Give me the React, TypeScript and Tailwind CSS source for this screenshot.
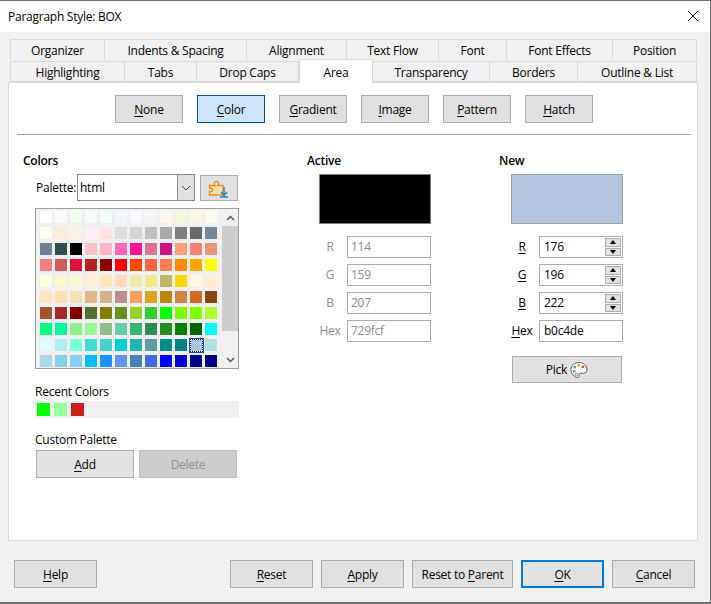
const palette = [
  ['#ffffff', '#fffafa', '#f0fff0', '#f5fffa', '#f0ffff', '#f0f8ff', '#f8f8ff', '#f5f5f5', '#fff5ee', '#f5f5dc', '#fdf5e6', '#fffaf0'],
  ['#fffff0', '#faebd7', '#faf0e6', '#fff0f5', '#ffe4e1', '#dcdcdc', '#d3d3d3', '#c0c0c0', '#a9a9a9', '#808080', '#696969', '#778899'],
  ['#708090', '#2f4f4f', '#000000', '#ffc0cb', '#ffb6c1', '#ff69b4', '#ff1493', '#db7093', '#c71585', '#ffa07a', '#fa8072', '#e9967a'],
  ['#f08080', '#cd5c5c', '#dc143c', '#b22222', '#8b0000', '#ff0000', '#ff4500', '#ff6347', '#ff7f50', '#ff8c00', '#ffa500', '#ffff00'],
  ['#ffffe0', '#fffacd', '#fafad2', '#ffefd5', '#ffe4b5', '#ffdab9', '#eee8aa', '#f0e68c', '#bdb76b', '#ffd700', '#fff8dc', '#ffebcd'],
  ['#ffe4c4', '#ffdead', '#f5deb3', '#deb887', '#d2b48c', '#bc8f8f', '#f4a460', '#daa520', '#b8860b', '#cd853f', '#d2691e', '#8b4513'],
  ['#a0522d', '#a52a2a', '#800000', '#556b2f', '#808000', '#6b8e23', '#9acd32', '#32cd32', '#00ff00', '#7cfc00', '#7fff00', '#adff2f'],
  ['#00ff7f', '#00fa9a', '#90ee90', '#98fb98', '#8fbc8f', '#66cdaa', '#3cb371', '#2e8b57', '#228b22', '#008000', '#006400', '#00ffff'],
  ['#e0ffff', '#afeeee', '#7fffd4', '#40e0d0', '#48d1cc', '#00ced1', '#20b2aa', '#5f9ea0', '#008b8b', '#008080', '#b0c4de', '#b0e0e6'],
  ['#add8e6', '#87ceeb', '#87cefa', '#00bfff', '#1e90ff', '#6495ed', '#4682b4', '#4169e1', '#0000ff', '#0000cd', '#00008b', '#000080'],
]

const topTabs = [
  { label: 'Organizer', w: 'w-[95px]' },
  { label: 'Indents & Spacing', w: 'w-[142px]' },
  { label: 'Alignment', w: 'w-[100px]' },
  { label: 'Text Flow', w: 'w-[92px]' },
  { label: 'Font', w: 'w-[68px]' },
  { label: 'Font Effects', w: 'w-[106px]' },
  { label: 'Position', w: 'w-[84px]' },
]

const lowerTabs = [
  { label: 'Highlighting', w: 'w-[115px]' },
  { label: 'Tabs', w: 'w-[72px]' },
  { label: 'Drop Caps', w: 'w-[102px]' },
  { label: 'Area', w: 'w-[74px]', active: true },
  { label: 'Transparency', w: 'w-[117px]' },
  { label: 'Borders', w: 'w-[88px]' },
  { label: 'Outline & List', w: 'w-[119px]' },
]

function Key({ before = '', k, after = '' }: { before?: string; k: string; after?: string }) {
  return (
    <span>
      {before}
      <span className="underline underline-offset-2">{k}</span>
      {after}
    </span>
  )
}

const tones = {
  normal: 'border border-[#adadad] bg-[#e1e1e1]',
  selected: 'border border-[#005499] bg-[#cce4f7]',
  disabled: 'border border-[#bfbfbf] bg-[#cccccc] text-[#8f8f8f]',
  primary: 'border-2 border-[#0078d7] bg-[#e1e1e1]',
}

function Btn({
  className,
  tone = 'normal',
  children,
}: {
  className: string
  tone?: keyof typeof tones
  children: React.ReactNode
}) {
  return <div className={`flex items-center justify-center pt-[1px] ${tones[tone]} ${className}`}>{children}</div>
}

function ReadOnlyField({ label, value }: { label: string; value: string }) {
  return (
    <div className="flex h-[22px] items-center">
      <div className="mr-[6px] w-[22px] text-center text-[#8a8a8a]">{label}</div>
      <div className="flex h-[22px] w-[84px] items-center border border-[#adadad] pl-[3px] text-[#8a8a8a]">{value}</div>
    </div>
  )
}

function SpinField({ k, value }: { k: string; value: string }) {
  return (
    <div className="flex h-[22px] items-center">
      <div className="mr-[6px] w-[22px] text-center">
        <Key k={k} />
      </div>
      <div className="flex h-[22px] w-[84px] items-center justify-between border border-[#adadad] pl-[4px] pr-[1px]">
        <span>{value}</span>
        <div className="flex h-[18px] w-[16px] flex-col gap-[1px]">
          <div className="flex h-[8.5px] flex-1 items-center justify-center border border-[#adadad] bg-[#e1e1e1]">
            <div className="h-0 w-0 border-x-[3.5px] border-b-[4px] border-x-transparent border-b-black" />
          </div>
          <div className="flex h-[8.5px] flex-1 items-center justify-center border border-[#adadad] bg-[#e1e1e1]">
            <div className="h-0 w-0 border-x-[3.5px] border-t-[4px] border-x-transparent border-t-black" />
          </div>
        </div>
      </div>
    </div>
  )
}

function PuzzleIcon() {
  return (
    <svg width="22" height="20" viewBox="0 0 22 20" fill="none">
      <path d="M1.5 7.5h5.5c-1.2-1.5-1-4 1.5-4s2.7 2.5 1.5 4h5v9.5H1.5v-3.500c2 .8 3.200-.5 3.200-1.500s-1.200-2.300-3.200-1.500z" fill="#fde3a7" stroke="#ed8b2d" strokeWidth="1.400" />
      <path d="M16 9v8M13 14l3 3.500 3-3.500M12 19h8" stroke="#2a7fc0" strokeWidth="1.300" />
    </svg>
  )
}

function PaletteIcon() {
  return (
    <svg width="18" height="18" viewBox="0 0 18 18" fill="none">
      <path d="M9 1.500C4.500 1.500 1 4.700 1 8.700c0 4 3.500 7.800 6.800 7.800 1.500 0 1.700-1 1.300-2-.5-1.300.2-2.300 1.500-2.300h3c2 0 3.400-1.300 3.400-3.500 0-4-3.400-7.200-8-7.200z" fill="#fff" stroke="#5a5a5a" strokeWidth="1" />
      <rect x="7.500" y="3" width="2.500" height="2.500" fill="#e0a020" />
      <rect x="11.500" y="4.500" width="2.500" height="2.500" fill="#e05050" />
      <rect x="3.500" y="5" width="2.500" height="2.500" fill="#50b070" />
      <rect x="3" y="9" width="2.500" height="2.500" fill="#4aa0d8" />
      <circle cx="6.500" cy="13.500" r="1.300" stroke="#5a5a5a" strokeWidth="0.800" />
    </svg>
  )
}

export default function App() {
  return (
    <div className="flex h-[604px] w-[711px] flex-col overflow-hidden border-r border-[#707070] bg-[#f0f0f0] text-[12px] leading-none tracking-[-0.25px] text-black [font-family:'Open_Sans',sans-serif]">
      {/* title bar */}
      <div className="flex h-[32px] shrink-0 items-center justify-between border-t border-[#707070] bg-white pl-[8px] pr-[11px]">
        <span className="pt-[1px]">Paragraph Style: BOX</span>
        <svg width="12" height="12" viewBox="0 0 12 12" className="mt-[-1px]">
          <path d="M1 1l10 10M11 1L1 11" stroke="#111" strokeWidth="1" />
        </svg>
      </div>

      {/* tabs */}
      <div className="ml-[10px] mt-[7px] flex h-[22px] shrink-0">
        {topTabs.map((t) => (
          <div key={t.label} className={`flex h-[21px] items-center justify-center border border-b-0 border-l-0 border-[#d9d9d9] pt-[1px] first:border-l ${t.w}`}>
            {t.label}
          </div>
        ))}
      </div>
      <div className="relative ml-[10px] flex h-[21px] shrink-0">
        {lowerTabs.map((t) => (
          <div
            key={t.label}
            className={
              t.active
                ? `relative z-10 mt-[-2px] flex h-[24px] items-center justify-center border border-b-0 border-[#d9d9d9] bg-white pt-[2px] ${t.w}`
                : `flex h-[21px] items-center justify-center border-y border-r border-[#d9d9d9] pt-[2px] first:border-l ${t.w}`
            }
          >
            {t.label}
          </div>
        ))}
      </div>

      {/* panel */}
      <div className="ml-[8px] h-[459px] w-[690px] shrink-0 border border-[#d9d9d9] bg-white">
        <div className="ml-[106px] mt-[12px] flex gap-[14px]">
          <Btn className="h-[28px] w-[68px]"><Key k="N" after="one" /></Btn>
          <Btn className="h-[28px] w-[68px]" tone="selected"><Key k="C" after="olor" /></Btn>
          <Btn className="h-[28px] w-[68px]"><Key k="G" after="radient" /></Btn>
          <Btn className="h-[28px] w-[68px]"><Key k="I" after="mage" /></Btn>
          <Btn className="h-[28px] w-[68px]"><Key k="P" after="attern" /></Btn>
          <Btn className="h-[28px] w-[68px]"><Key k="H" after="atch" /></Btn>
        </div>
        <div className="ml-[8px] mt-[11px] h-px w-[674px] bg-[#a0a0a0]" />

        <div className="mt-[20px] flex">
          {/* colors column */}
          <div className="ml-[14px] w-[284px]">
            <div className="font-semibold">Colors</div>
            <div className="ml-[13px] mt-[7px] flex h-[27px] items-center">
              <span className="w-[41px] pt-[1px]">Palette:</span>
              <div className="flex h-[27px] w-[118px] items-center border-[1.5px] border-[#8a8a8a] pl-[2px]">
                <span className="flex-1 pt-[1px]">html</span>
                <div className="flex h-full w-[17px] items-center justify-center border-l border-[#8a8a8a] bg-[#e1e1e1]">
                  <svg width="10" height="6" viewBox="0 0 10 6"><path d="M1 1l4 4 4-4" fill="none" stroke="#444" /></svg>
                </div>
              </div>
              <Btn className="ml-[5px] h-[26px] w-[38px]"><PuzzleIcon /></Btn>
            </div>
            <div className="ml-[12px] mt-[7px] flex h-[161px] w-[204px] border border-[#a0a0a0]">
              <div className="w-[186px] bg-[#f0f0f0] pl-[2.5px]">
                <div className="grid grid-cols-[repeat(12,15px)] grid-rows-[repeat(10,16px)]">
                  {palette.flat().map((c, i) => (
                    <div key={i} className="flex items-center justify-center">
                      {c === '#b0c4de' ? (
                        <div className="border border-[#0054c8]">
                          <div className="border border-dotted border-black bg-white">
                            <div className="h-[11px] w-[11px]" style={{ backgroundColor: c }} />
                          </div>
                        </div>
                      ) : (
                        <div className="h-[12px] w-[12px]" style={{ backgroundColor: c }} />
                      )}
                    </div>
                  ))}
                </div>
              </div>
              <div className="flex w-[16px] flex-col bg-[#f0f0f0]">
                <div className="flex h-[17px] items-center justify-center">
                  <svg width="9" height="6" viewBox="0 0 9 6"><path d="M1 5l3.500-3.500L8 5" fill="none" stroke="#555" strokeWidth="1.500" /></svg>
                </div>
                <div className="h-[105px] bg-[#cdcdcd]" />
                <div className="flex flex-1 items-end justify-center pb-[5px]">
                  <svg width="9" height="6" viewBox="0 0 9 6"><path d="M1 1l3.500 3.500L8 1" fill="none" stroke="#555" strokeWidth="1.500" /></svg>
                </div>
              </div>
            </div>
            <div className="ml-[12px] mt-[17px]">Recent Colors</div>
            <div className="ml-[12px] mt-[3px] flex h-[17px] w-[204px] items-center gap-[4px] bg-[#f0f0f0] pl-[2px]">
              <div className="h-[13px] w-[13px] bg-[#00ff00]" />
              <div className="h-[13px] w-[13px] bg-[#99ff99]" />
              <div className="h-[13px] w-[13px] bg-[#c9211e]" />
            </div>
            <div className="ml-[12px] mt-[16px]">Custom Palette</div>
            <div className="ml-[13px] mt-[4px] flex gap-[5px]">
              <Btn className="h-[28px] w-[98px]"><Key k="A" after="dd" /></Btn>
              <Btn className="h-[28px] w-[98px]" tone="disabled">Delete</Btn>
            </div>
          </div>

          {/* active column */}
          <div className="w-[192px]">
            <div className="font-semibold">Active</div>
            <div className="ml-[12px] mt-[7px] h-[50px] w-[112px] border border-[#808080] bg-black" />
            <div className="ml-[12px] mt-[12px] flex flex-col gap-[6px]">
              <ReadOnlyField label="R" value="114" />
              <ReadOnlyField label="G" value="159" />
              <ReadOnlyField label="B" value="207" />
              <ReadOnlyField label="Hex" value="729fcf" />
            </div>
          </div>

          {/* new column */}
          <div className="w-[140px]">
            <div className="font-semibold">New</div>
            <div className="ml-[12px] mt-[7px] h-[50px] w-[112px] border border-[#a0a0a0] bg-[#b0c4de]" />
            <div className="ml-[12px] mt-[12px] flex flex-col gap-[6px]">
              <SpinField k="R" value="176" />
              <SpinField k="G" value="196" />
              <SpinField k="B" value="222" />
              <div className="flex h-[22px] items-center">
                <div className="mr-[6px] w-[22px] text-center"><Key k="H" after="ex" /></div>
                <div className="flex h-[22px] w-[84px] items-center border border-[#adadad] pl-[4px]">b0c4de</div>
              </div>
            </div>
            <Btn className="ml-[13px] mt-[14px] h-[27px] w-[110px] gap-[3px]">Pick <PaletteIcon /></Btn>
          </div>
        </div>
      </div>

      {/* footer */}
      <div className="ml-[14px] mt-[19px] flex">
        <Btn className="h-[28px] w-[83px]"><Key k="H" after="elp" /></Btn>
        <Btn className="ml-[133px] h-[28px] w-[83px]"><Key k="R" after="eset" /></Btn>
        <Btn className="ml-[8px] h-[28px] w-[83px]"><Key k="A" after="pply" /></Btn>
        <Btn className="ml-[8px] h-[28px] w-[101px]"><Key before="Reset to " k="P" after="arent" /></Btn>
        <Btn className="ml-[8px] h-[28px] w-[83px]" tone="primary"><Key k="O" after="K" /></Btn>
        <Btn className="ml-[8px] h-[28px] w-[83px]"><Key k="C" after="ancel" /></Btn>
      </div>
      <div className="mt-auto h-[2px] w-full bg-[#707070]" />
    </div>
  )
}
